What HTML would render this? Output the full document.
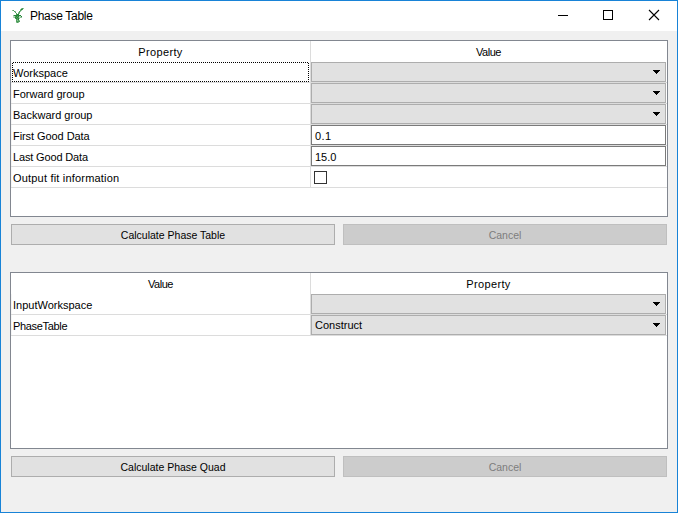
<!DOCTYPE html>
<html><head><meta charset="utf-8">
<style>
html,body{margin:0;padding:0;}
body{width:678px;height:513px;overflow:hidden;position:relative;background:#f0f0f0;font-family:"Liberation Sans",sans-serif;}
.a{position:absolute;box-sizing:border-box;}
.win{left:0;top:0;width:678px;height:513px;border:1px solid #1883d7;}
.title{left:1px;top:1px;width:676px;height:30px;background:#fff;}
.t{position:absolute;white-space:pre;font-size:11px;line-height:20px;height:20px;color:#000;}
.tbl{background:#fff;border:1px solid #828790;}
.hl{position:absolute;height:1px;background:#dcdcdc;}
.vl{position:absolute;width:1px;background:#dcdcdc;}
.combo{position:absolute;box-sizing:border-box;height:20px;width:355px;left:311px;background:#e1e1e1;border:1px solid #adadad;}
.combo .arr{position:absolute;left:341px;top:7px;width:7px;height:4px;background:linear-gradient(#000,#000) 0 0/7px 1px no-repeat,linear-gradient(#000,#000) 1px 1px/5px 1px no-repeat,linear-gradient(#000,#000) 2px 2px/3px 1px no-repeat,linear-gradient(#000,#000) 3px 3px/1px 1px no-repeat;}
.edit{position:absolute;box-sizing:border-box;height:20px;width:355px;left:311px;background:#fff;border:1px solid #7a7a7a;}
.btn{position:absolute;box-sizing:border-box;height:21px;width:324px;background:#e1e1e1;border:1px solid #adadad;}
.btn.dis{background:#cccccc;border-color:#bfbfbf;}
.ctr{position:absolute;left:0;right:0;text-align:center;white-space:pre;font-size:10.5px;line-height:20px;height:20px;}
</style></head><body>
<div class="a win"></div>
<div class="a title"></div>
<!-- icon -->
<svg class="a" style="left:8px;top:4px" width="20" height="22" viewBox="0 0 20 22" shape-rendering="crispEdges"><rect x="4" y="6" width="1" height="1" fill="#8ec297"/><rect x="5" y="6" width="1" height="1" fill="#4f9e5c"/><rect x="6" y="7" width="1" height="1" fill="#4f9e5c"/><rect x="7" y="7" width="1" height="1" fill="#8ec297"/><rect x="7" y="8" width="1" height="1" fill="#4f9e5c"/><rect x="8" y="9" width="1" height="1" fill="#4f9e5c"/><rect x="8" y="10" width="1" height="1" fill="#4f9e5c"/><rect x="9" y="10" width="1" height="1" fill="#238537"/><rect x="13" y="4" width="1" height="1" fill="#8ec297"/><rect x="14" y="4" width="1" height="1" fill="#4f9e5c"/><rect x="15" y="4" width="1" height="1" fill="#8ec297"/><rect x="12" y="5" width="1" height="1" fill="#8ec297"/><rect x="13" y="5" width="1" height="1" fill="#238537"/><rect x="14" y="5" width="1" height="1" fill="#4f9e5c"/><rect x="12" y="6" width="1" height="1" fill="#4f9e5c"/><rect x="13" y="6" width="1" height="1" fill="#8ec297"/><rect x="11" y="7" width="1" height="1" fill="#4f9e5c"/><rect x="12" y="7" width="1" height="1" fill="#8ec297"/><rect x="10" y="8" width="1" height="1" fill="#8ec297"/><rect x="11" y="8" width="1" height="1" fill="#4f9e5c"/><rect x="10" y="9" width="1" height="1" fill="#4f9e5c"/><rect x="11" y="9" width="1" height="1" fill="#8ec297"/><rect x="10" y="10" width="1" height="1" fill="#238537"/><rect x="5" y="11" width="1" height="1" fill="#8ec297"/><rect x="6" y="11" width="1" height="1" fill="#238537"/><rect x="7" y="11" width="1" height="1" fill="#238537"/><rect x="8" y="11" width="1" height="1" fill="#238537"/><rect x="9" y="11" width="1" height="1" fill="#238537"/><rect x="10" y="11" width="1" height="1" fill="#238537"/><rect x="11" y="11" width="1" height="1" fill="#238537"/><rect x="12" y="11" width="1" height="1" fill="#238537"/><rect x="5" y="12" width="1" height="1" fill="#b8d8bd"/><rect x="6" y="12" width="1" height="1" fill="#b8d8bd"/><rect x="7" y="12" width="1" height="1" fill="#4f9e5c"/><rect x="8" y="12" width="1" height="1" fill="#238537"/><rect x="9" y="12" width="1" height="1" fill="#4f9e5c"/><rect x="10" y="12" width="1" height="1" fill="#238537"/><rect x="11" y="12" width="1" height="1" fill="#b8d8bd"/><rect x="12" y="12" width="1" height="1" fill="#b8d8bd"/><rect x="13" y="12" width="1" height="1" fill="#238537"/><rect x="5" y="13" width="1" height="1" fill="#b8d8bd"/><rect x="6" y="13" width="1" height="1" fill="#8ec297"/><rect x="7" y="13" width="1" height="1" fill="#238537"/><rect x="8" y="13" width="1" height="1" fill="#4f9e5c"/><rect x="9" y="13" width="1" height="1" fill="#238537"/><rect x="10" y="13" width="1" height="1" fill="#4f9e5c"/><rect x="11" y="13" width="1" height="1" fill="#b8d8bd"/><rect x="12" y="13" width="1" height="1" fill="#8ec297"/><rect x="13" y="13" width="1" height="1" fill="#8ec297"/><rect x="7" y="14" width="1" height="1" fill="#4f9e5c"/><rect x="8" y="14" width="1" height="1" fill="#238537"/><rect x="9" y="14" width="1" height="1" fill="#4f9e5c"/><rect x="10" y="14" width="1" height="1" fill="#238537"/><rect x="11" y="14" width="1" height="1" fill="#8ec297"/><rect x="8" y="15" width="1" height="1" fill="#4f9e5c"/><rect x="9" y="15" width="1" height="1" fill="#4f9e5c"/><rect x="10" y="15" width="1" height="1" fill="#238537"/><rect x="8" y="16" width="1" height="1" fill="#4f9e5c"/><rect x="9" y="16" width="1" height="1" fill="#8ec297"/><rect x="10" y="16" width="1" height="1" fill="#4f9e5c"/><rect x="11" y="16" width="1" height="1" fill="#8ec297"/><rect x="8" y="17" width="1" height="1" fill="#4f9e5c"/><rect x="9" y="17" width="1" height="1" fill="#4f9e5c"/><rect x="10" y="17" width="1" height="1" fill="#4f9e5c"/><rect x="11" y="17" width="1" height="1" fill="#4f9e5c"/><rect x="8" y="18" width="1" height="1" fill="#8ec297"/><rect x="9" y="18" width="1" height="1" fill="#4f9e5c"/><rect x="10" y="18" width="1" height="1" fill="#8ec297"/></svg>
<div class="t" style="left:30px;top:6px;font-size:12px;letter-spacing:-0.3px">Phase Table</div>
<!-- title buttons -->
<svg class="a" style="left:540px;top:0" width="138" height="31" viewBox="0 0 138 31" shape-rendering="crispEdges">
  <rect x="18" y="15" width="10" height="1" fill="#000"/>
  <rect x="63.5" y="10.5" width="9" height="9" fill="none" stroke="#000" stroke-width="1"/>
</svg>
<svg class="a" style="left:640px;top:0" width="38" height="31" viewBox="0 0 38 31">
  <path d="M9 10 L19 20 M19 10 L9 20" stroke="#000" stroke-width="1.1" fill="none"/>
</svg>

<!-- TABLE 1 -->
<div class="a tbl" style="left:10px;top:40px;width:658px;height:177px"></div>
<div class="vl" style="left:310px;top:41px;height:147px"></div>
<div class="a" style="left:11px;top:62px;width:1px;height:125px;background:#f6f6f6"></div>
<div class="hl" style="left:11px;top:82px;width:656px"></div>
<div class="hl" style="left:11px;top:103px;width:656px"></div>
<div class="hl" style="left:11px;top:124px;width:656px"></div>
<div class="hl" style="left:11px;top:145px;width:656px"></div>
<div class="hl" style="left:11px;top:166px;width:656px"></div>
<div class="hl" style="left:11px;top:187px;width:656px"></div>
<div class="t" style="left:11px;width:299px;text-align:center;top:42px;letter-spacing:0.35px">Property</div>
<div class="t" style="left:311px;width:355px;text-align:center;top:42px;letter-spacing:-0.5px">Value</div>

<div class="t" style="left:13px;top:63px">Workspace</div>
<div class="t" style="left:13px;top:84px">Forward group</div>
<div class="t" style="left:13px;top:105px">Backward group</div>
<div class="t" style="left:13px;top:126px;letter-spacing:-0.07px">First Good Data</div>
<div class="t" style="left:13px;top:147px;letter-spacing:-0.15px">Last Good Data</div>
<div class="t" style="left:13px;top:168px;letter-spacing:0.19px">Output fit information</div>
<!-- focus rect -->
<div class="a" style="left:12px;top:62px;width:297px;height:1px;background:repeating-linear-gradient(90deg,transparent 0 1px,#000 1px 2px)"></div>
<div class="a" style="left:12px;top:81px;width:297px;height:1px;background:repeating-linear-gradient(90deg,#000 0 1px,transparent 1px 2px)"></div>
<div class="a" style="left:12px;top:62px;width:1px;height:20px;background:repeating-linear-gradient(180deg,transparent 0 1px,#000 1px 2px)"></div>
<div class="a" style="left:308px;top:62px;width:1px;height:20px;background:repeating-linear-gradient(180deg,transparent 0 1px,#000 1px 2px)"></div>

<div class="combo" style="top:62px"><div class="arr"></div></div>
<div class="combo" style="top:83px"><div class="arr"></div></div>
<div class="combo" style="top:104px"><div class="arr"></div></div>
<div class="edit" style="top:125px"><div class="t" style="left:3px;top:0px;letter-spacing:0.4px">0.1</div></div>
<div class="edit" style="top:146px"><div class="t" style="left:3px;top:0px">15.0</div></div>
<div class="a" style="left:314px;top:171px;width:13px;height:13px;border:1px solid #333;background:#fff"></div>

<!-- buttons 1 -->
<div class="btn" style="left:11px;top:224px"><div class="ctr" style="top:0px">Calculate Phase Table</div></div>
<div class="btn dis" style="left:343px;top:224px"><div class="ctr" style="top:0px;color:#7d7d7d">Cancel</div></div>

<!-- TABLE 2 -->
<div class="a tbl" style="left:10px;top:272px;width:658px;height:177px"></div>
<div class="vl" style="left:310px;top:273px;height:63px"></div>
<div class="a" style="left:11px;top:294px;width:1px;height:41px;background:#f6f6f6"></div>
<div class="hl" style="left:11px;top:314px;width:656px"></div>
<div class="hl" style="left:11px;top:335px;width:656px"></div>
<div class="t" style="left:11px;width:299px;text-align:center;top:274px;letter-spacing:-0.5px">Value</div>
<div class="t" style="left:311px;width:355px;text-align:center;top:274px;letter-spacing:0.35px">Property</div>
<div class="t" style="left:13px;top:295px">InputWorkspace</div>
<div class="t" style="left:13px;top:316px;letter-spacing:-0.33px">PhaseTable</div>
<div class="combo" style="top:294px"><div class="arr"></div></div>
<div class="combo" style="top:315px"><div class="arr"></div><div class="t" style="left:3px;top:-1px">Construct</div></div>

<!-- buttons 2 -->
<div class="btn" style="left:11px;top:456px"><div class="ctr" style="top:0px">Calculate Phase Quad</div></div>
<div class="btn dis" style="left:343px;top:456px"><div class="ctr" style="top:0px;color:#7d7d7d">Cancel</div></div>
</body></html>
